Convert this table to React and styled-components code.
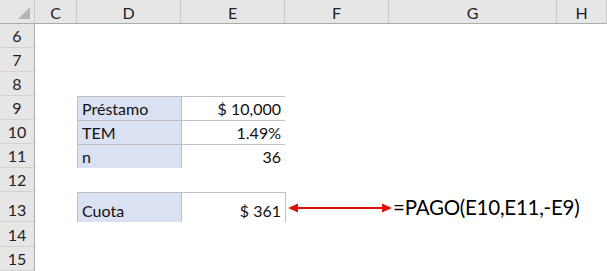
import React from "react";
import styled, { createGlobalStyle } from "styled-components";

const GlobalStyle = createGlobalStyle`
  html, body {
    margin: 0;
    padding: 0;
    background: #fff;
  }
  body {
    font-family: Lato, "Open Sans", "Liberation Sans", sans-serif;
    color: #111;
  }
`;

const COLS = [
  { key: "C", width: 42 },
  { key: "D", width: 104 },
  { key: "E", width: 104 },
  { key: "F", width: 104 },
  { key: "G", width: 168 },
  { key: "H", width: 50 },
];

const ROWS = [
  { n: 6, h: 24 },
  { n: 7, h: 24 },
  { n: 8, h: 24 },
  { n: 9, h: 24 },
  { n: 10, h: 24 },
  { n: 11, h: 24 },
  { n: 12, h: 24 },
  { n: 13, h: 30 },
  { n: 14, h: 25 },
  { n: 15, h: 24 },
];

// cells with content, keyed "COLROW"
const cells = {
  D9: { text: "Préstamo", label: true },
  E9: { text: "$ 10,000", right: true },
  D10: { text: "TEM", label: true },
  E10: { text: "1.49%", right: true },
  D11: { text: "n", label: true },
  E11: { text: "36", right: true },
  D13: { text: "Cuota", label: true },
  E13: { text: "$ 361", right: true },
};

const Sheet = styled.div`
  display: grid;
  grid-template-columns: 35px ${COLS.map((c) => c.width + "px").join(" ")};
  grid-template-rows: 24px ${ROWS.map((r) => r.h + "px").join(" ")};
  width: 607px;
  height: 271px;
  overflow: hidden;
  background: #fff;
`;

const Corner = styled.div`
  position: relative;
  background: #e6e6e6;
  border-right: 1px solid #c8c8c8;
  border-bottom: 1px solid #ababab;
  box-sizing: border-box;

  &::after {
    content: "";
    position: absolute;
    right: 4px;
    bottom: 4px;
    width: 0;
    height: 0;
    border-left: 12px solid transparent;
    border-bottom: 12px solid #b4b4b4;
  }
`;

const ColHead = styled.div`
  display: flex;
  align-items: center;
  justify-content: center;
  background: #e6e6e6;
  border-right: 1px solid #c8c8c8;
  border-bottom: 1px solid #ababab;
  box-sizing: border-box;
  font-size: 16px;
  color: #222;
  padding-top: 1px;
`;

const RowHead = styled.div`
  display: flex;
  align-items: flex-end;
  justify-content: center;
  padding-bottom: 2px;
  background: #e6e6e6;
  border-right: 1px solid #ababab;
  border-bottom: 1px solid #d2d2d2;
  box-sizing: border-box;
  font-size: 16px;
  color: #222;
`;

const Cell = styled.div`
  display: flex;
  align-items: flex-end;
  justify-content: ${(p) => (p.$right ? "flex-end" : "flex-start")};
  padding: 0 4px 2px;
  box-sizing: border-box;
  font-size: 16px;
  color: #111;
  white-space: nowrap;
  background: ${(p) => (p.$label ? "#d9e1f2" : "#fff")};
  ${(p) =>
    p.$boxed &&
    `
    border: 1px solid #bfbfbf;
    margin: 0 -1px -1px 0;
  `}
`;

const ArrowCell = styled.div`
  position: relative;
  overflow: visible;
`;

const Arrow = styled.svg`
  position: absolute;
  left: 3px;
  top: 10px;
  overflow: visible;
`;

const Formula = styled.div`
  grid-column: span 2;
  display: flex;
  align-items: center;
  padding-left: 4px;
  font-size: 20.5px;
  letter-spacing: -0.25px;
  color: #000;
  white-space: nowrap;
`;

export default function App() {
  const out = [<Corner key="corner" />];
  COLS.forEach((c) => out.push(<ColHead key={"h" + c.key}>{c.key}</ColHead>));

  ROWS.forEach((r) => {
    out.push(<RowHead key={"r" + r.n}>{r.n}</RowHead>);
    COLS.forEach((c) => {
      const id = c.key + r.n;
      if (id === "F13") {
        out.push(
          <ArrowCell key={id}>
            <Arrow width="104" height="12" viewBox="0 0 104 12">
              <line x1="6" y1="6" x2="96" y2="6" stroke="#e01010" strokeWidth="2" />
              <polygon points="0,6 10,1.5 10,10.5" fill="#e01010" />
              <polygon points="104,6 94,1.5 94,10.5" fill="#e01010" />
            </Arrow>
          </ArrowCell>
        );
        return;
      }
      if (id === "G13") {
        // formula text runs over into H13
        out.push(<Formula key={id}>=PAGO(E10,E11,-E9)</Formula>);
        return;
      }
      if (id === "H13") return;
      const cell = cells[id];
      out.push(
        <Cell key={id} $label={cell?.label} $right={cell?.right} $boxed={!!cell}>
          {cell?.text}
        </Cell>
      );
    });
  });

  return (
    <>
      <GlobalStyle />
      <Sheet>{out}</Sheet>
    </>
  );
}
